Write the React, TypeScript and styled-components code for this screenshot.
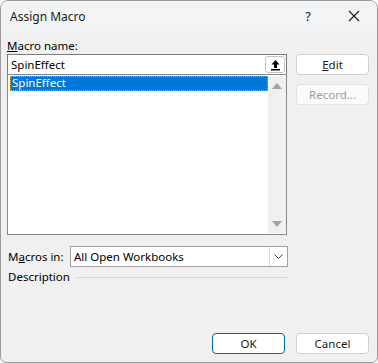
import React from 'react'
import styled, { createGlobalStyle } from 'styled-components'

const Global = createGlobalStyle`
  html, body {
    margin: 0;
    padding: 0;
    background: #ffffff;
  }
  * {
    box-sizing: border-box;
  }
`

const App = () => {
    return (
        <>
            <Global />
            <Window>
                <TitleBar>
                    <Title>Assign Macro</Title>
                    <CaptionButton>?</CaptionButton>
                    <CaptionButton>
                        <svg width="12" height="12" viewBox="0 0 12 12">
                            <path d="M1 1 L11 11 M11 1 L1 11" stroke="#1a1a1a" strokeWidth="1.1" fill="none" />
                        </svg>
                    </CaptionButton>
                </TitleBar>

                <Body>
                    <Top>
                        <LeftCol>
                            <Label><u>M</u>acro name:</Label>
                            <NameBox>
                                <NameText>SpinEffect</NameText>
                                <UploadButton>
                                    <svg width="11" height="12" viewBox="0 0 11 12">
                                        <path d="M5.5 1 L1.5 5.5 H4 V9 H7 V5.5 H9.5 Z" fill="#000" />
                                        <rect x="1" y="10" width="9" height="1.5" fill="#000" />
                                    </svg>
                                </UploadButton>
                            </NameBox>
                            <ListBox>
                                <ListItems>
                                    <ListItem selected>SpinEffect</ListItem>
                                </ListItems>
                                <ScrollBar>
                                    <svg width="10" height="6" viewBox="0 0 10 6">
                                        <path d="M5 0 L10 6 H0 Z" fill="#a3a3a3" />
                                    </svg>
                                    <svg width="10" height="6" viewBox="0 0 10 6">
                                        <path d="M0 0 H10 L5 6 Z" fill="#a3a3a3" />
                                    </svg>
                                </ScrollBar>
                            </ListBox>
                        </LeftCol>
                        <RightCol>
                            <Button><u>E</u>dit</Button>
                            <Button disabled>Record...</Button>
                        </RightCol>
                    </Top>

                    <MacrosRow>
                        <Label>M<u>a</u>cros in:</Label>
                        <Select>
                            <SelectText>All Open Workbooks</SelectText>
                            <SelectArrow>
                                <svg width="9" height="5" viewBox="0 0 9 5">
                                    <path d="M0.5 0.5 L4.5 4.5 L8.5 0.5" stroke="#444" strokeWidth="1" fill="none" />
                                </svg>
                            </SelectArrow>
                        </Select>
                    </MacrosRow>

                    <DescRow>
                        <Label>Description</Label>
                        <Rule />
                    </DescRow>

                    <Footer>
                        <Button primary>OK</Button>
                        <Button>Cancel</Button>
                    </Footer>
                </Body>
            </Window>
        </>
    )
}

export default App

const Window = styled.div`
    width: 378px;
    height: 363px;
    display: flex;
    flex-direction: column;
    border: 1px solid #9c9c9c;
    border-radius: 8px 8px 6px 6px;
    overflow: hidden;
    background: #f0f0f0;
    font-family: "Noto Sans", "Open Sans", sans-serif;
    font-size: 11.5px;
    color: #000;
`

const TitleBar = styled.div`
    height: 30px;
    flex-shrink: 0;
    display: flex;
    align-items: center;
    padding-left: 9px;
    background: #f3f4f6;
`

const Title = styled.div`
    flex: 1;
    font-size: 12px;
    color: #1a1a1a;
`

const CaptionButton = styled.div`
    width: 46px;
    height: 30px;
    display: flex;
    align-items: center;
    justify-content: center;
    font-size: 13px;
    color: #1a1a1a;
    &:first-of-type {
        padding-left: 2px;
    }
`

const Body = styled.div`
    flex: 1;
    display: flex;
    flex-direction: column;
    padding: 7px 8px 8px 6px;
`

const Top = styled.div`
    display: grid;
    grid-template-columns: 280px 1fr;
    column-gap: 9px;
`

const LeftCol = styled.div`
    display: flex;
    flex-direction: column;
`

const RightCol = styled.div`
    display: flex;
    flex-direction: column;
    gap: 9px;
    padding-top: 16px;
`

const Label = styled.div`
    font-size: 11.5px;
    line-height: 16px;
    white-space: nowrap;
`

const NameBox = styled.div`
    height: 20px;
    display: flex;
    align-items: center;
    background: #fff;
    border: 1px solid #7a7a7a;
    border-bottom: none;
    padding: 0 1px 0 3px;
`

const NameText = styled.div`
    flex: 1;
    line-height: 18px;
`

const UploadButton = styled.div`
    width: 20px;
    height: 17px;
    display: flex;
    align-items: center;
    justify-content: center;
    border: 1px solid #c4c4c4;
    border-radius: 3px;
    background: #fff;
`

const ListBox = styled.div`
    height: 161px;
    display: flex;
    background: #fff;
    border: 1px solid #828790;
    padding: 1px 0 1px 1px;
`

const ListItems = styled.div`
    flex: 1;
    padding-left: 1px;
`

const ListItem = styled.div<{ selected?: boolean }>`
    height: 15px;
    line-height: 14px;
    padding-left: 2px;
    background: ${p => (p.selected ? '#0078d7' : 'transparent')};
    color: ${p => (p.selected ? '#fff' : '#000')};
    outline: ${p => (p.selected ? '1px dotted #f0a030' : 'none')};
    outline-offset: -1px;
`

const ScrollBar = styled.div`
    width: 18px;
    display: flex;
    flex-direction: column;
    justify-content: space-between;
    align-items: center;
    padding: 7px 0 6px;
    background: #f0f0f0;
`

const Button = styled.button<{ primary?: boolean }>`
    width: 73px;
    height: 21px;
    padding: 0;
    font-family: inherit;
    font-size: 11.5px;
    background: ${p => (p.disabled ? '#fbfbfb' : '#fff')};
    color: ${p => (p.disabled ? '#9d9d9d' : '#1a1a1a')};
    border: 1px solid ${p => (p.primary ? '#0067c0' : p.disabled ? '#e2e2e2' : '#d0d0d0')};
    border-radius: 4px;
`

const MacrosRow = styled.div`
    display: flex;
    align-items: center;
    margin-top: 11px;
    ${Label} {
        width: 63px;
        padding-left: 1px;
    }
`

const Select = styled.div`
    width: 218px;
    height: 21px;
    display: flex;
    background: #fff;
    border: 1px solid #a0a0a0;
`

const SelectText = styled.div`
    flex: 1;
    padding-left: 3px;
    line-height: 19px;
`

const SelectArrow = styled.div`
    width: 18px;
    display: flex;
    align-items: center;
    justify-content: center;
    border-left: 1px solid #d9d9d9;
`

const DescRow = styled.div`
    display: flex;
    align-items: center;
    margin-top: 2px;
    padding-left: 1px;
    width: 281px;
    gap: 6px;
`

const Rule = styled.div`
    flex: 1;
    height: 1px;
    background: #d7d7d7;
`

const Footer = styled.div`
    margin-top: auto;
    display: flex;
    justify-content: flex-end;
    gap: 11px;
`
